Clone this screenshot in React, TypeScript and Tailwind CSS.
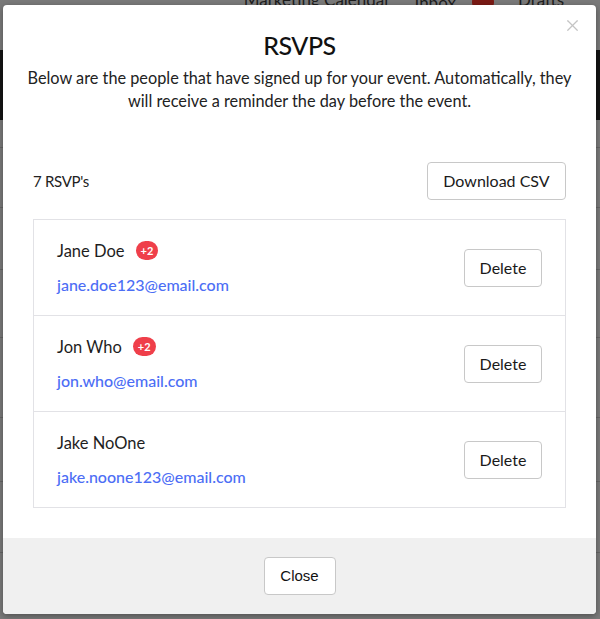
import { X } from "lucide-react";

const rsvps = [
  { name: "Jane Doe", email: "jane.doe123@email.com", guests: 2 },
  { name: "Jon Who", email: "jon.who@email.com", guests: 2 },
  { name: "Jake NoOne", email: "jake.noone123@email.com", guests: 0 },
];

function Backdrop() {
  return (
    <div className="absolute inset-0 bg-[#7a7a7a]">
      <div className="flex justify-end gap-6 pr-[36px] text-[17px] leading-none text-[#1e1e1e] -mt-[9px]">
        <span>Marketing Calendar</span>
        <span className="flex items-center gap-4">
          Inbox <span className="h-[22px] w-[22px] rounded-full bg-[#7a1a14]" />
        </span>
        <span>Drafts</span>
      </div>
      <div className="mt-[37px] h-[70px] bg-[#141414]" />
      <div className="h-[28px] border-b border-[#666]" />
      <div className="h-[60px] border-b border-[#666]" />
      <div className="h-[62px] border-b border-[#666]" />
      <div className="h-[68px] border-b border-[#666]" />
      <div className="h-[80px] border-b border-[#666]" />
      <div className="h-[64px] border-b border-[#666]" />
      <div className="h-[71px] border-b border-[#666]" />
    </div>
  );
}

function Button({ children, className = "" }: { children: React.ReactNode; className?: string }) {
  return (
    <button
      className={`rounded-[4px] border border-[#c8c8c8] bg-white text-[16px] text-[#1a1a1a] ${className}`}
    >
      {children}
    </button>
  );
}

export default function App() {
  return (
    <div className="relative h-[619px] w-[600px] overflow-hidden font-['Lato',sans-serif]">
      <Backdrop />
      <div className="absolute left-[3px] top-[5px] flex w-[593px] flex-col overflow-hidden rounded-[4px] bg-white shadow-[0_2px_6px_rgba(0,0,0,0.35)]">
        <button className="absolute right-[14px] top-[11px] text-[#c4c4c4]">
          <X size={19} strokeWidth={1.5} />
        </button>

        <div className="px-4 pt-[23px] text-center">
          <h1 className="text-[25px] font-medium leading-[34px] tracking-[-0.5px] text-[#111]">
            RSVPS
          </h1>
          <p className="mt-[4px] text-[16.3px] leading-[23px] text-[#222]">
            Below are the people that have signed up for your event. Automatically, they will
            receive a reminder the day before the event.
          </p>
        </div>

        <div className="px-[30px] pt-[50px] pb-[30px]">
          <div className="flex items-center justify-between">
            <span className="text-[15px] tracking-[-0.3px] text-[#222]">7 RSVP's</span>
            <Button className="h-[38px] w-[139px]">Download CSV</Button>
          </div>

          <div className="mt-[19px] border border-[#e2e2e6]">
            {rsvps.map((r, i) => (
              <div
                key={r.email}
                className={`flex items-center justify-between px-[23px] ${i > 0 ? "h-[96px] border-t border-[#e2e2e6]" : "h-[95px]"}`}
              >
                <div className="flex flex-col gap-[10px]">
                  <div className="flex items-center gap-[11px] text-[16.5px] leading-[24px] text-[#1e1e1e]">
                    {r.name}
                    {r.guests > 0 && (
                      <span className="flex h-[19px] items-center rounded-full bg-[#ef3f4a] px-[5px] text-[11px] font-bold leading-none text-white">
                        +{r.guests}
                      </span>
                    )}
                  </div>
                  <span className="text-[16px] font-medium leading-[24px] text-[#4c6ef5]">
                    {r.email}
                  </span>
                </div>
                <Button className="h-[38px] w-[78px]">Delete</Button>
              </div>
            ))}
          </div>
        </div>

        <div className="flex justify-center bg-[#f0f0f0] py-[19px]">
          <button className="h-[38px] w-[72px] rounded-[4px] border border-[#c8c8c8] bg-white font-['Liberation_Sans',sans-serif] text-[15px] text-[#111]">
            Close
          </button>
        </div>
      </div>
    </div>
  );
}
